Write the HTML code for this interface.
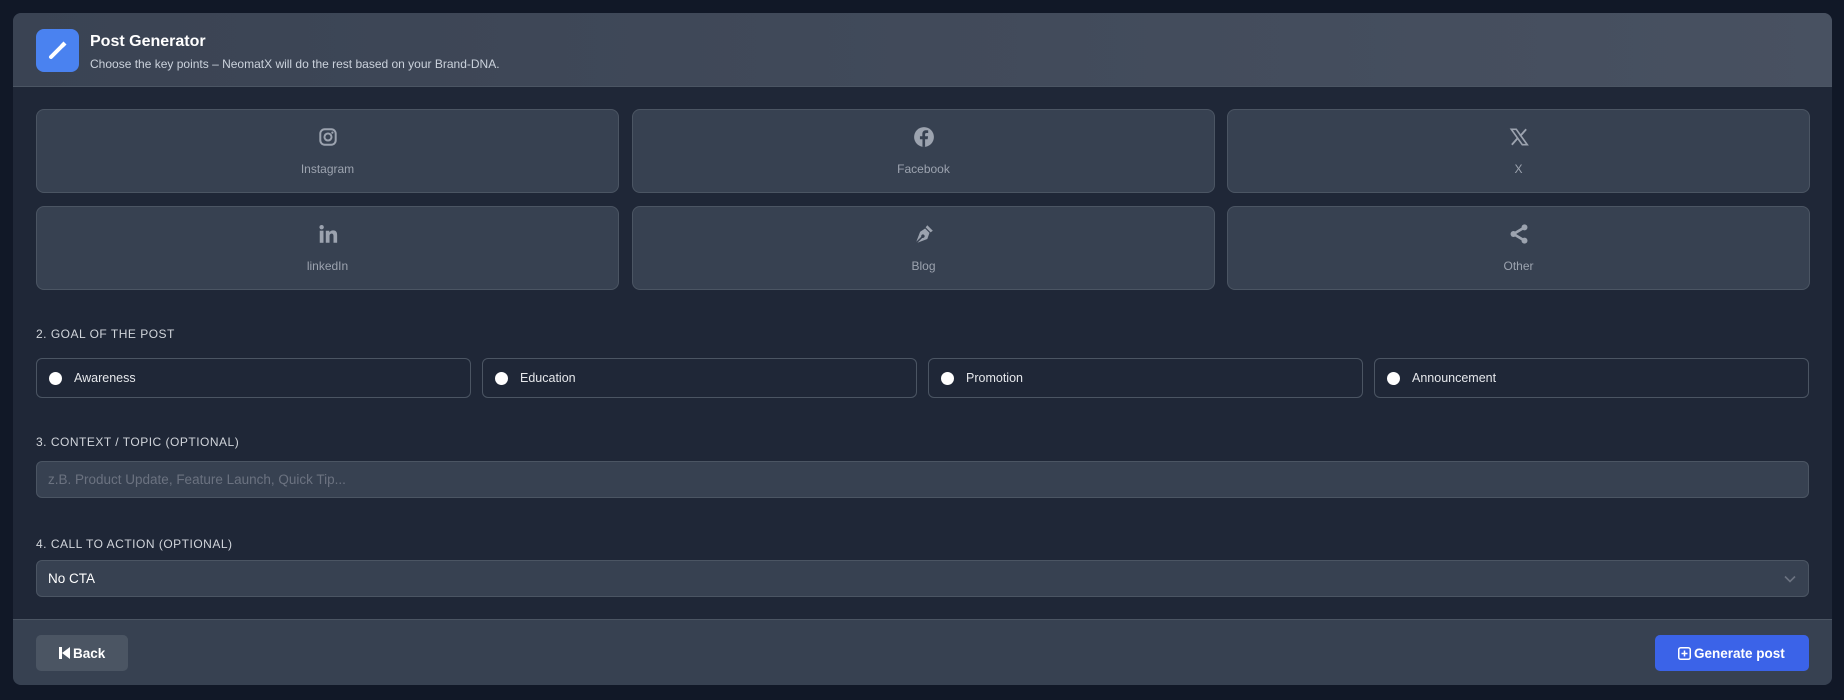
<!DOCTYPE html>
<html><head><meta charset="utf-8"><style>
*{box-sizing:border-box;margin:0;padding:0}
body{width:1844px;height:700px;background:#111827;font-family:"Liberation Sans",sans-serif;position:relative;overflow:hidden}
.card{position:absolute;left:13px;top:13px;width:1819px;height:672px;background:#1f2737;border-radius:8px;overflow:hidden}
.head{position:absolute;left:0;top:0;right:0;height:74px;background:linear-gradient(90deg,#3a4353,#485161);border-bottom:1px solid #4b5563}
.ic{position:absolute;left:23px;top:16px;width:43px;height:43px;border-radius:8px;background:#4a82f0}
.t1{position:absolute;left:77px;top:20px;color:#fff;font-size:16px;font-weight:bold}
.t2{position:absolute;left:77px;top:44px;color:#cbd2dc;font-size:12px}
.pb{position:absolute;width:583px;height:84px;background:#374151;border:1px solid #4b5563;border-radius:8px;color:#9ca3af;font-size:12px;text-align:center}
.pb svg{position:absolute;left:50%;top:16px;margin-left:-11px;width:22px;height:22px;fill:#9ca3af}
.pb span{position:absolute;left:0;right:0;top:52px}
.lbl{position:absolute;left:23px;color:#d1d5db;font-size:12px;letter-spacing:.5px}
.rb{position:absolute;top:345px;width:435px;height:40px;border:1px solid #4b5563;border-radius:6px;color:#e5e7eb;font-size:12.5px}
.rb i{position:absolute;left:12px;top:13px;width:13px;height:13px;border-radius:50%;background:#fff}
.rb span{position:absolute;left:37px;top:12px}
.inp{position:absolute;left:23px;width:1773px;height:37px;background:#374151;border:1px solid #4b5563;border-radius:6px;font-size:13.5px}
.foot{position:absolute;left:0;right:0;top:606px;bottom:0;background:#374151;border-top:1px solid #4b5563}
</style></head><body>
<div class="card">
<div class="head">
<div class="ic"><svg width="43" height="43" viewBox="0 0 43 43"><path d="M15 28 L26 17" stroke="#fff" stroke-width="4" stroke-linecap="round"/><path d="M24.5 15.5l3-3 3 3-3 3z" fill="#fff"/></svg></div>
<div class="t1">Post Generator</div>
<div class="t2">Choose the key points – NeomatX will do the rest based on your Brand-DNA.</div>
</div>

<div class="pb" style="left:23px;top:96px"><svg viewBox="0 0 20 20"><rect x="3" y="3" width="14" height="14" rx="4" fill="none" stroke="#9ca3af" stroke-width="1.8"/><circle cx="10" cy="10" r="3.2" fill="none" stroke="#9ca3af" stroke-width="1.8"/><circle cx="14" cy="6" r="1"/></svg><span>Instagram</span></div>
<div class="pb" style="left:619px;top:96px"><svg viewBox="0 0 20 20"><circle cx="10" cy="10" r="9"/><path d="M11 19v-7h2.3l.4-2.7H11V7.7c0-.8.3-1.3 1.4-1.3h1.4V4c-.3 0-1.1-.1-2-.1-2 0-3.3 1.2-3.3 3.4v2H6.3V12h2.3v7z" fill="#374151"/></svg><span>Facebook</span></div>
<div class="pb" style="left:1214px;top:96px"><svg viewBox="0 0 20 20"><path d="M3 3h4.5l10 14H13z" fill="none" stroke="#9ca3af" stroke-width="1.5"/><path d="M16.5 3L11 9.2M3.5 17l5.6-6.3" stroke="#9ca3af" stroke-width="1.7"/></svg><span>X</span></div>
<div class="pb" style="left:23px;top:193px"><svg viewBox="0 0 20 20"><rect x="2.5" y="7" width="3.4" height="11"/><circle cx="4.2" cy="3.8" r="2"/><path d="M8 7h3.2v1.6c.6-1 1.8-1.9 3.5-1.9 3 0 3.6 2 3.6 4.5V18H15v-5.8c0-1.3-.2-2.5-1.7-2.5s-1.9 1.1-1.9 2.4V18H8z"/></svg><span>linkedIn</span></div>
<div class="pb" style="left:619px;top:193px"><svg viewBox="0 0 20 20"><path d="M13 2l5 5-2 1.5-4.5-4.5z"/><path d="M11 5l4 4-2 5.5L4 18l4.5-4.5a1.6 1.6 0 1 0-1-1L3 17 6.5 8z"/></svg><span>Blog</span></div>
<div class="pb" style="left:1214px;top:193px"><svg viewBox="0 0 20 20"><circle cx="15" cy="4" r="2.7"/><circle cx="15" cy="16" r="2.7"/><circle cx="5" cy="10" r="2.7"/><path d="M15 4L5 10l10 6" stroke="#9ca3af" stroke-width="2.4" fill="none"/></svg><span>Other</span></div>

<div class="lbl" style="top:314px">2. GOAL OF THE POST</div>
<div class="rb" style="left:23px"><i></i><span>Awareness</span></div>
<div class="rb" style="left:469px"><i></i><span>Education</span></div>
<div class="rb" style="left:915px"><i></i><span>Promotion</span></div>
<div class="rb" style="left:1361px"><i></i><span>Announcement</span></div>

<div class="lbl" style="top:422px">3. CONTEXT / TOPIC (OPTIONAL)</div>
<div class="inp" style="top:448px;color:#6b7280;padding:10px 11px">z.B. Product Update, Feature Launch, Quick Tip...</div>

<div class="lbl" style="top:524px">4. CALL TO ACTION (OPTIONAL)</div>
<div class="inp" style="top:547px;color:#fff;padding:10px 11px">No CTA<svg style="position:absolute;right:12px;top:14px" width="12" height="8" viewBox="0 0 12 8"><path d="M1 1.5l5 5 5-5" stroke="#6b7280" stroke-width="1.6" fill="none"/></svg></div>

<div class="foot">
<div style="position:absolute;left:23px;top:15px;width:92px;height:36px;background:#4b5563;border-radius:5px;color:#fff;font-size:13.5px;font-weight:bold;padding:11px 0 0 23px"><span style="display:inline-block;width:3px;height:12px;background:#fff;vertical-align:-1px"></span><span style="display:inline-block;border-right:8px solid #fff;border-top:6px solid transparent;border-bottom:6px solid transparent;vertical-align:-1px;margin-right:3px"></span>Back</div>
<div style="position:absolute;left:1642px;top:15px;width:154px;height:36px;background:#3b63e8;border-radius:5px;color:#fff;font-size:13.5px;font-weight:bold;padding:11px 0 0 23px"><svg width="13" height="13" viewBox="0 0 13 13" style="vertical-align:-2px;margin-right:3px"><rect x=".75" y=".75" width="11.5" height="11.5" rx="2" fill="none" stroke="#fff" stroke-width="1.5"/><path d="M6.5 3.5v6M3.5 6.5h6" stroke="#fff" stroke-width="1.5"/></svg>Generate post</div>
</div>
</div>
</body></html>
